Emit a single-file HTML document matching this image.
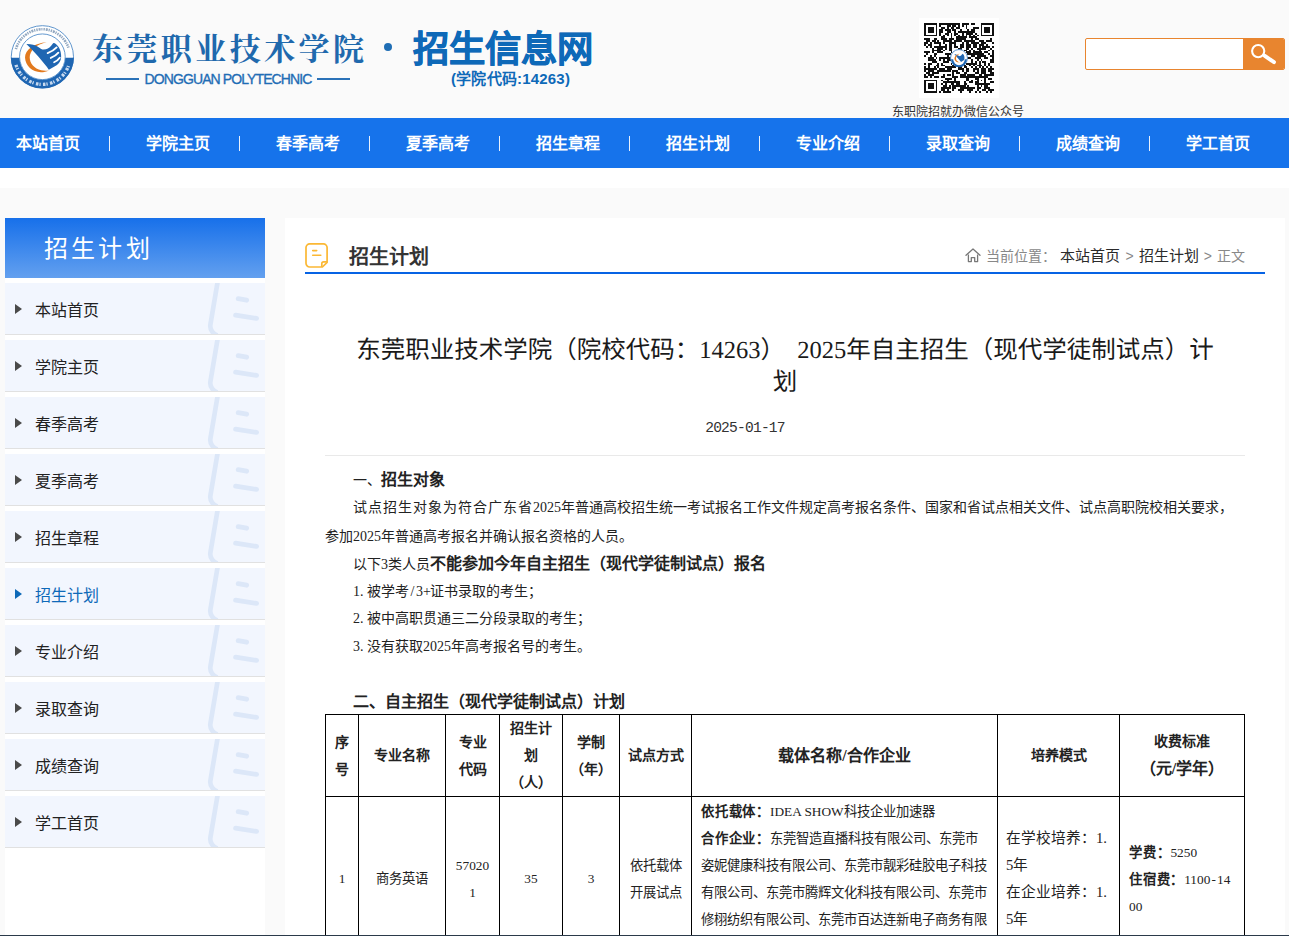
<!DOCTYPE html>
<html lang="zh-CN">
<head>
<meta charset="utf-8">
<title>东莞职业技术学院 · 招生信息网</title>
<style>
*{box-sizing:border-box;margin:0;padding:0}
html,body{width:1289px;height:936px;overflow:hidden}
body{background:#fafafa;font-family:"Liberation Sans",sans-serif;color:#222;position:relative}
a{color:inherit;text-decoration:none}
ul{list-style:none}

/* ---------- header ---------- */
#header{position:absolute;left:0;top:0;width:1289px;height:118px;background:#fafafa}
#emblem{position:absolute;left:9.8px;top:24.2px;width:64.4px;height:64.4px}
#logo-cn{position:absolute;left:90px;top:28px;width:276px;height:40px}
#logo-en{position:absolute;left:106px;top:71px;width:244px;height:17px;line-height:17px;font-size:14px;color:#1f6db5;text-align:center;white-space:nowrap;letter-spacing:-.9px;-webkit-text-stroke:.35px #1f6db5}
#logo-en:before,#logo-en:after{content:"";position:absolute;top:7px;width:33px;height:2px;background:#2a72b8}
#logo-en:before{left:0}
#logo-en:after{right:0}
#logo-dot{position:absolute;left:384px;top:43px;width:8px;height:8px;border-radius:50%;background:#1f6eb5}
#site-name{position:absolute;left:413px;top:27.5px;height:44px;line-height:44px;font-size:36.3px;font-weight:bold;color:#0e69b8;-webkit-text-stroke:.7px #0e69b8;white-space:nowrap}
#site-code{position:absolute;left:451px;top:69px;height:20px;line-height:20px;font-size:15px;font-weight:bold;color:#0e69b8;letter-spacing:.2px;white-space:nowrap}
#qr{position:absolute;left:919px;top:18px;width:80px;height:80px;background:#fff}
#qr-cap{position:absolute;left:878px;top:104px;width:160px;height:16px;line-height:16px;font-size:12px;color:#333;text-align:center;white-space:nowrap}
#search{position:absolute;left:1085px;top:38px;width:200px;height:32px;border:1px solid #e8852f;border-radius:2px;background:#fff;overflow:hidden}
#search-btn{position:absolute;right:-1px;top:-1px;width:42px;height:32px;background:#e8852f}

/* ---------- nav ---------- */
#nav{position:absolute;left:0;top:118px;width:1289px;height:50px;background:#1673eb}
#nav ul{position:absolute;left:0;top:0;height:50px;white-space:nowrap}
#nav li{position:absolute;top:0;width:130px;height:50px;line-height:51px;padding-left:15.5px;font-size:16px;font-weight:bold;color:#fff}
#nav li i{position:absolute;left:109px;top:18px;width:1px;height:15px;background:#e9f1fd}
#strip{position:absolute;left:0;top:168px;width:1289px;height:20px;background:#fff}

/* ---------- sidebar ---------- */
#side{position:absolute;left:5px;top:218px;width:260px;height:718px;background:#fff}
#side h2{height:60px;line-height:62px;padding-left:39px;font-size:24px;font-weight:normal;letter-spacing:3.2px;color:#fff;background:linear-gradient(#1770ea,#63a0ef)}
#side li{position:relative;height:52px;margin-top:5px;background:#f2f6fe;border-bottom:1px solid #e1e1e1;line-height:56px;padding-left:30px;font-size:16px;color:#222;overflow:hidden}
#side li:before{content:"";position:absolute;left:10px;top:21px;border-left:7px solid #4a4a4a;border-top:5px solid transparent;border-bottom:5px solid transparent}
#side li.on{color:#0e69b8}
#side li.on:before{border-left-color:#0e69b8}
#side li svg{position:absolute;left:200px;top:0;width:60px;height:51px}

/* ---------- main ---------- */
#main{position:absolute;left:285px;top:218px;width:1000px;height:718px;background:#fff}
#bar{position:absolute;left:20px;top:20px;width:960px;height:36px;border-bottom:2px solid #0763e4}
#bar svg.doc{position:absolute;left:0;top:5px;width:24px;height:26px}
#bar h3{position:absolute;left:44px;top:5px;height:28px;line-height:28px;font-size:20px;font-weight:bold;color:#333}
#crumb{position:absolute;right:20px;top:6px;height:24px;line-height:24px;font-size:14px;color:#888;white-space:nowrap}
#crumb svg{position:absolute;left:-21px;top:4px;width:16px;height:15px}
#crumb a{font-size:15px;color:#2a2a2a}
#crumb i{font-style:normal;margin:0 1.2px}
#art-title{position:absolute;left:60px;top:117px;width:880px;text-align:center;font-family:"Liberation Serif",serif;font-size:24.5px;line-height:32px;text-rendering:geometricPrecision;font-weight:normal;color:#1a1a1a;white-space:nowrap}
#art-date{position:absolute;left:400px;top:199px;width:120px;height:22px;line-height:22px;text-align:center;font-family:"Liberation Mono",monospace;font-size:14.6px;letter-spacing:-.8px;color:#333;white-space:nowrap}
#art-hr{position:absolute;left:40px;top:237px;width:920px;height:1px;background:#e9e9e9}
#art{position:absolute;left:40px;top:247px;width:920px;font-family:"Liberation Serif",serif;font-size:14px;line-height:28px;color:#222}
#art p{position:absolute;left:0;height:28px;white-space:nowrap;text-indent:28px}
#art p.ni{text-indent:0}
#art b{font-size:16px}
#art i{display:inline-block;font-style:normal;text-indent:0;text-align:center}
#art i.w1{width:7px}
#art i.w2{width:14px;text-align:left}
#art .h2{font-size:16px;font-weight:bold}
#tbl{position:absolute;left:40px;top:496px;width:920px;border-collapse:collapse;table-layout:fixed;font-family:"Liberation Serif",serif;font-size:13.33px;line-height:27px;color:#222}
#tbl td,#tbl th{border:1px solid #000;text-align:center;vertical-align:middle;padding:0}
#tbl th{font-weight:bold;font-size:14px}
#tbl td.l{text-align:left;padding-left:9px;white-space:nowrap}
#tbl td b{letter-spacing:.8px}
#tbl td i{display:inline-block;width:6.7px;text-align:center;font-style:normal}
#botline{position:absolute;left:0;top:935px;width:1289px;height:1px;background:#2b3a4a}
</style>
</head>
<body>

<div id="header">
  <svg id="emblem" viewBox="0 0 66 66">
    <defs><clipPath id="lowhalf"><rect x="0" y="34.6" width="66" height="32"/></clipPath></defs>
    <circle cx="33.2" cy="33.6" r="31.9" fill="#fff" stroke="#5b93cc" stroke-width="1"/>
    <circle cx="33.2" cy="33.6" r="27.9" fill="none" stroke="#1f66b2" stroke-width="9" clip-path="url(#lowhalf)"/>
    <circle cx="33.2" cy="33.6" r="23.4" fill="#fff" stroke="#4f8ac8" stroke-width="0.9"/>
    <path d="M6 25.8A28.3 28.3 0 0 1 59.9 24.25" fill="none" stroke="#93a9c2" stroke-width="2.7" stroke-dasharray="1.5 0.9 2.1 0.8 1.2 1"/>
    <path d="M6.14 41.9A28.3 28.3 0 0 0 60.26 41.9" fill="none" stroke="#dbe7f5" stroke-width="3.4" stroke-dasharray="2.6 1 1.3 2.4" opacity=".9"/>
    <path d="M37.6 18.6C25 19.5 15.2 26 15.4 34.4C15.7 43 23 49.4 31.6 49.4C34.6 49.4 37.6 48.8 39.8 47.6C37 48 34.4 47.9 32 47.4C25 46 20.2 40.6 20.2 34.2C20.2 27 27 20.6 37.6 18.6Z" fill="#e27a1f"/>
    <path d="M16.8 20.4C21.5 20.3 25.6 21.2 28.6 23.2C30.6 24.6 32.6 26.2 34.6 26.2C37.6 26 40.4 24.6 42.4 22C43.2 20.8 44 19.6 44.8 19.4C46.2 19.4 48.4 21.2 50.2 24C51.8 26.8 52.6 30.6 52.4 34.4C52 38 50.4 40.6 47.8 42.2C45.2 43.8 42.4 45.4 39.8 46.8C37.4 43.4 33.4 38.6 29 33.4C24.6 28.4 20.4 23.8 16.8 20.4Z" fill="#1f66b2"/>
    <path d="M38.6 29.8C42 28.6 45.4 26.6 47.8 24M41.8 34.8C45 33.6 47.8 31.6 49.6 29.4M45.2 39.2C47.6 38.2 49.6 36.6 51 34.6" fill="none" stroke="#fff" stroke-width="1.9" stroke-linecap="round"/>
  </svg>
  <svg id="logo-cn" viewBox="90 28 276 40" width="276" height="40"><text x="92" y="60" font-family="&quot;Liberation Serif&quot;, &quot;Noto Serif CJK SC&quot;, serif" font-size="31" font-weight="bold" fill="#1f69ad" textLength="272" lengthAdjust="spacing">东莞职业技术学院</text></svg>
  <div id="logo-en">DONGGUAN POLYTECHNIC</div>
  <div id="logo-dot"></div>
  <div id="site-name">招生信息网</div>
  <div id="site-code">(学院代码:14263)</div>
  <div id="qr"><svg viewBox="-2.8 -2.8 42.6 42.6" width="80" height="80" shape-rendering="crispEdges"><path fill="#111" d="M0 0h7v1h-7zM8 0h11v1h-11zM20 0h4v1h-4zM25 0h2v1h-2zM30 0h7v1h-7zM0 1h1v1h-1zM6 1h1v1h-1zM8 1h1v1h-1zM12 1h2v1h-2zM15 1h2v1h-2zM18 1h1v1h-1zM20 1h1v1h-1zM22 1h1v1h-1zM30 1h1v1h-1zM36 1h1v1h-1zM0 2h1v1h-1zM2 2h3v1h-3zM6 2h1v1h-1zM9 2h2v1h-2zM12 2h1v1h-1zM14 2h2v1h-2zM17 2h2v1h-2zM22 2h1v1h-1zM26 2h3v1h-3zM30 2h1v1h-1zM32 2h3v1h-3zM36 2h1v1h-1zM0 3h1v1h-1zM2 3h3v1h-3zM6 3h1v1h-1zM8 3h2v1h-2zM11 3h3v1h-3zM15 3h2v1h-2zM19 3h1v1h-1zM23 3h1v1h-1zM25 3h2v1h-2zM30 3h1v1h-1zM32 3h3v1h-3zM36 3h1v1h-1zM0 4h1v1h-1zM2 4h3v1h-3zM6 4h1v1h-1zM8 4h2v1h-2zM12 4h2v1h-2zM16 4h1v1h-1zM18 4h9v1h-9zM30 4h1v1h-1zM32 4h3v1h-3zM36 4h1v1h-1zM0 5h1v1h-1zM6 5h1v1h-1zM8 5h1v1h-1zM11 5h2v1h-2zM14 5h1v1h-1zM16 5h2v1h-2zM20 5h1v1h-1zM22 5h4v1h-4zM27 5h1v1h-1zM30 5h1v1h-1zM36 5h1v1h-1zM0 6h7v1h-7zM8 6h1v1h-1zM10 6h1v1h-1zM12 6h1v1h-1zM14 6h1v1h-1zM16 6h1v1h-1zM18 6h1v1h-1zM20 6h1v1h-1zM22 6h1v1h-1zM24 6h1v1h-1zM26 6h1v1h-1zM28 6h1v1h-1zM30 6h7v1h-7zM9 7h2v1h-2zM14 7h1v1h-1zM17 7h6v1h-6zM24 7h4v1h-4zM0 8h3v1h-3zM5 8h2v1h-2zM9 8h3v1h-3zM13 8h3v1h-3zM17 8h5v1h-5zM25 8h1v1h-1zM27 8h2v1h-2zM35 8h1v1h-1zM1 9h2v1h-2zM4 9h2v1h-2zM7 9h1v1h-1zM10 9h5v1h-5zM16 9h4v1h-4zM21 9h6v1h-6zM29 9h3v1h-3zM33 9h3v1h-3zM0 10h2v1h-2zM3 10h1v1h-1zM5 10h4v1h-4zM10 10h1v1h-1zM13 10h4v1h-4zM20 10h1v1h-1zM22 10h2v1h-2zM25 10h4v1h-4zM30 10h3v1h-3zM36 10h1v1h-1zM0 11h1v1h-1zM2 11h2v1h-2zM8 11h1v1h-1zM11 11h1v1h-1zM13 11h2v1h-2zM16 11h1v1h-1zM19 11h2v1h-2zM22 11h3v1h-3zM26 11h2v1h-2zM29 11h3v1h-3zM33 11h1v1h-1zM1 12h1v1h-1zM3 12h1v1h-1zM5 12h7v1h-7zM13 12h2v1h-2zM16 12h2v1h-2zM19 12h2v1h-2zM22 12h3v1h-3zM26 12h2v1h-2zM29 12h1v1h-1zM31 12h4v1h-4zM36 12h1v1h-1zM4 13h1v1h-1zM7 13h3v1h-3zM11 13h1v1h-1zM13 13h2v1h-2zM18 13h2v1h-2zM22 13h2v1h-2zM25 13h1v1h-1zM28 13h5v1h-5zM35 13h1v1h-1zM4 14h5v1h-5zM10 14h1v1h-1zM13 14h2v1h-2zM21 14h2v1h-2zM24 14h1v1h-1zM26 14h1v1h-1zM29 14h1v1h-1zM34 14h1v1h-1zM36 14h1v1h-1zM0 15h3v1h-3zM4 15h1v1h-1zM7 15h3v1h-3zM14 15h1v1h-1zM22 15h3v1h-3zM26 15h5v1h-5zM32 15h2v1h-2zM36 15h1v1h-1zM1 16h1v1h-1zM5 16h2v1h-2zM11 16h3v1h-3zM23 16h9v1h-9zM34 16h1v1h-1zM36 16h1v1h-1zM0 17h1v1h-1zM3 17h1v1h-1zM5 17h1v1h-1zM12 17h1v1h-1zM25 17h2v1h-2zM28 17h5v1h-5zM35 17h2v1h-2zM2 18h3v1h-3zM6 18h1v1h-1zM8 18h6v1h-6zM23 18h2v1h-2zM27 18h3v1h-3zM32 18h2v1h-2zM36 18h1v1h-1zM2 19h4v1h-4zM8 19h1v1h-1zM10 19h1v1h-1zM12 19h2v1h-2zM25 19h1v1h-1zM28 19h1v1h-1zM30 19h1v1h-1zM35 19h2v1h-2zM4 20h3v1h-3zM10 20h3v1h-3zM25 20h1v1h-1zM27 20h1v1h-1zM29 20h1v1h-1zM31 20h2v1h-2zM35 20h2v1h-2zM0 21h1v1h-1zM2 21h2v1h-2zM7 21h1v1h-1zM9 21h1v1h-1zM14 21h1v1h-1zM22 21h6v1h-6zM29 21h1v1h-1zM32 21h1v1h-1zM34 21h1v1h-1zM2 22h1v1h-1zM6 22h2v1h-2zM9 22h2v1h-2zM15 22h1v1h-1zM21 22h1v1h-1zM24 22h1v1h-1zM26 22h1v1h-1zM28 22h3v1h-3zM32 22h1v1h-1zM34 22h1v1h-1zM0 23h1v1h-1zM2 23h1v1h-1zM5 23h1v1h-1zM7 23h1v1h-1zM11 23h6v1h-6zM18 23h2v1h-2zM21 23h2v1h-2zM25 23h1v1h-1zM27 23h1v1h-1zM29 23h1v1h-1zM31 23h1v1h-1zM33 23h1v1h-1zM35 23h1v1h-1zM0 24h7v1h-7zM8 24h3v1h-3zM12 24h3v1h-3zM18 24h3v1h-3zM22 24h2v1h-2zM26 24h3v1h-3zM30 24h3v1h-3zM34 24h3v1h-3zM0 25h1v1h-1zM2 25h3v1h-3zM7 25h7v1h-7zM15 25h3v1h-3zM20 25h1v1h-1zM22 25h2v1h-2zM26 25h1v1h-1zM28 25h1v1h-1zM30 25h3v1h-3zM34 25h2v1h-2zM1 26h2v1h-2zM4 26h4v1h-4zM15 26h1v1h-1zM17 26h2v1h-2zM21 26h2v1h-2zM27 26h2v1h-2zM30 26h3v1h-3zM35 26h2v1h-2zM0 27h1v1h-1zM2 27h3v1h-3zM10 27h1v1h-1zM12 27h2v1h-2zM15 27h1v1h-1zM19 27h3v1h-3zM23 27h4v1h-4zM29 27h2v1h-2zM32 27h5v1h-5zM0 28h2v1h-2zM3 28h1v1h-1zM5 28h3v1h-3zM9 28h2v1h-2zM15 28h3v1h-3zM19 28h15v1h-15zM11 29h4v1h-4zM16 29h1v1h-1zM22 29h2v1h-2zM27 29h2v1h-2zM32 29h1v1h-1zM34 29h2v1h-2zM0 30h7v1h-7zM9 30h1v1h-1zM12 30h1v1h-1zM16 30h1v1h-1zM22 30h2v1h-2zM25 30h1v1h-1zM28 30h1v1h-1zM30 30h1v1h-1zM32 30h1v1h-1zM0 31h1v1h-1zM6 31h1v1h-1zM10 31h9v1h-9zM21 31h1v1h-1zM24 31h2v1h-2zM27 31h2v1h-2zM32 31h1v1h-1zM35 31h2v1h-2zM0 32h1v1h-1zM2 32h3v1h-3zM6 32h1v1h-1zM9 32h1v1h-1zM11 32h1v1h-1zM14 32h2v1h-2zM17 32h2v1h-2zM21 32h2v1h-2zM27 32h8v1h-8zM0 33h1v1h-1zM2 33h3v1h-3zM6 33h1v1h-1zM10 33h2v1h-2zM13 33h1v1h-1zM15 33h7v1h-7zM23 33h1v1h-1zM28 33h1v1h-1zM30 33h1v1h-1zM32 33h2v1h-2zM0 34h1v1h-1zM2 34h3v1h-3zM6 34h1v1h-1zM9 34h5v1h-5zM15 34h2v1h-2zM19 34h8v1h-8zM28 34h2v1h-2zM32 34h3v1h-3zM0 35h1v1h-1zM6 35h1v1h-1zM9 35h2v1h-2zM12 35h1v1h-1zM15 35h1v1h-1zM18 35h3v1h-3zM23 35h3v1h-3zM28 35h1v1h-1zM31 35h2v1h-2zM34 35h3v1h-3zM0 36h7v1h-7zM8 36h1v1h-1zM10 36h4v1h-4zM19 36h1v1h-1zM24 36h1v1h-1zM27 36h1v1h-1zM29 36h1v1h-1zM33 36h1v1h-1zM35 36h1v1h-1z"/><g shape-rendering="auto"><circle cx="18.5" cy="18.5" r="4.5" fill="#fff" stroke="#4f8ac8" stroke-width=".5"/><path d="M14.3 19.2A4.2 4.2 0 0 0 22.7 19.2L21.6 19.2A3.1 3.1 0 0 1 15.4 19.2Z" fill="#1f66b2"/><path d="M16 16.4C17.6 16.6 18.2 17.6 18.9 17.5C19.8 17.3 20 16.3 20.5 16.2C21.4 17 21.7 18.6 21.2 19.6L19.6 20.6Z" fill="#1f66b2"/><path d="M18.8 16.2C16.8 16.6 15.8 18 16.2 19.4C16.6 20.5 17.8 21 19.4 20.7C17.8 20.6 16.9 19.8 16.9 18.7C16.9 17.6 17.6 16.8 18.8 16.2Z" fill="#e27a1f"/></g></svg></div>
  <div id="qr-cap">东职院招就办微信公众号</div>
  <div id="search"><div id="search-btn"><svg viewBox="0 0 42 32" width="42" height="32"><circle cx="15.2" cy="13.1" r="6.1" fill="none" stroke="#fff" stroke-width="2.1"/><path d="M21.8 17.9L31 24.2" stroke="#fff" stroke-width="3.9" stroke-linecap="round"/></svg></div></div>
</div>

<div id="nav">
  <ul>
    <li style="left:0"><a>本站首页</a><i></i></li>
    <li style="left:130px"><a>学院主页</a><i></i></li>
    <li style="left:260px"><a>春季高考</a><i></i></li>
    <li style="left:390px"><a>夏季高考</a><i></i></li>
    <li style="left:520px"><a>招生章程</a><i></i></li>
    <li style="left:650px"><a>招生计划</a><i></i></li>
    <li style="left:780px"><a>专业介绍</a><i></i></li>
    <li style="left:910px"><a>录取查询</a><i></i></li>
    <li style="left:1040px"><a>成绩查询</a><i></i></li>
    <li style="left:1170px"><a>学工首页</a></li>
  </ul>
</div>
<div id="strip"></div>

<div id="side">
  <h2>招生计划</h2>
  <ul>
    <li><a>本站首页</a><svg viewBox="0 0 60 51"><path d="M12.6 -1L5.4 41.5C4.8 46 6.8 50 12.2 52.5" fill="none" stroke="#dce7f8" stroke-width="4.7"/><path d="M33.2 15.7L41.7 17.2M30.6 32.2L51.6 35.4" stroke="#dce7f8" stroke-width="4.8" stroke-linecap="round"/></svg></li>
    <li><a>学院主页</a><svg viewBox="0 0 60 51"><path d="M12.6 -1L5.4 41.5C4.8 46 6.8 50 12.2 52.5" fill="none" stroke="#dce7f8" stroke-width="4.7"/><path d="M33.2 15.7L41.7 17.2M30.6 32.2L51.6 35.4" stroke="#dce7f8" stroke-width="4.8" stroke-linecap="round"/></svg></li>
    <li><a>春季高考</a><svg viewBox="0 0 60 51"><path d="M12.6 -1L5.4 41.5C4.8 46 6.8 50 12.2 52.5" fill="none" stroke="#dce7f8" stroke-width="4.7"/><path d="M33.2 15.7L41.7 17.2M30.6 32.2L51.6 35.4" stroke="#dce7f8" stroke-width="4.8" stroke-linecap="round"/></svg></li>
    <li><a>夏季高考</a><svg viewBox="0 0 60 51"><path d="M12.6 -1L5.4 41.5C4.8 46 6.8 50 12.2 52.5" fill="none" stroke="#dce7f8" stroke-width="4.7"/><path d="M33.2 15.7L41.7 17.2M30.6 32.2L51.6 35.4" stroke="#dce7f8" stroke-width="4.8" stroke-linecap="round"/></svg></li>
    <li><a>招生章程</a><svg viewBox="0 0 60 51"><path d="M12.6 -1L5.4 41.5C4.8 46 6.8 50 12.2 52.5" fill="none" stroke="#dce7f8" stroke-width="4.7"/><path d="M33.2 15.7L41.7 17.2M30.6 32.2L51.6 35.4" stroke="#dce7f8" stroke-width="4.8" stroke-linecap="round"/></svg></li>
    <li class="on"><a>招生计划</a><svg viewBox="0 0 60 51"><path d="M12.6 -1L5.4 41.5C4.8 46 6.8 50 12.2 52.5" fill="none" stroke="#dce7f8" stroke-width="4.7"/><path d="M33.2 15.7L41.7 17.2M30.6 32.2L51.6 35.4" stroke="#dce7f8" stroke-width="4.8" stroke-linecap="round"/></svg></li>
    <li><a>专业介绍</a><svg viewBox="0 0 60 51"><path d="M12.6 -1L5.4 41.5C4.8 46 6.8 50 12.2 52.5" fill="none" stroke="#dce7f8" stroke-width="4.7"/><path d="M33.2 15.7L41.7 17.2M30.6 32.2L51.6 35.4" stroke="#dce7f8" stroke-width="4.8" stroke-linecap="round"/></svg></li>
    <li><a>录取查询</a><svg viewBox="0 0 60 51"><path d="M12.6 -1L5.4 41.5C4.8 46 6.8 50 12.2 52.5" fill="none" stroke="#dce7f8" stroke-width="4.7"/><path d="M33.2 15.7L41.7 17.2M30.6 32.2L51.6 35.4" stroke="#dce7f8" stroke-width="4.8" stroke-linecap="round"/></svg></li>
    <li><a>成绩查询</a><svg viewBox="0 0 60 51"><path d="M12.6 -1L5.4 41.5C4.8 46 6.8 50 12.2 52.5" fill="none" stroke="#dce7f8" stroke-width="4.7"/><path d="M33.2 15.7L41.7 17.2M30.6 32.2L51.6 35.4" stroke="#dce7f8" stroke-width="4.8" stroke-linecap="round"/></svg></li>
    <li><a>学工首页</a><svg viewBox="0 0 60 51"><path d="M12.6 -1L5.4 41.5C4.8 46 6.8 50 12.2 52.5" fill="none" stroke="#dce7f8" stroke-width="4.7"/><path d="M33.2 15.7L41.7 17.2M30.6 32.2L51.6 35.4" stroke="#dce7f8" stroke-width="4.8" stroke-linecap="round"/></svg></li>
  </ul>
</div>

<div id="main">
  <div id="bar">
    <svg class="doc" viewBox="0 0 24 26"><path d="M4.7 0.9H18.4A3.7 3.7 0 0 1 22.1 4.6V19.4L17.4 24H4.7A3.7 3.7 0 0 1 1 20.3V4.6A3.7 3.7 0 0 1 4.7 0.9Z" fill="none" stroke="#fbb834" stroke-width="1.7" stroke-linejoin="round"/><path d="M22.1 18.9H18.6A1.8 1.8 0 0 0 16.8 20.7V24" fill="none" stroke="#fbb834" stroke-width="1.7"/><path d="M7.7 7.6H11.7M7.7 12.3H15.8" stroke="#fbb834" stroke-width="1.6" stroke-linecap="round"/></svg>
    <h3>招生计划</h3>
    <div id="crumb"><svg viewBox="0 0 16 15"><path d="M1 7.2L8 1L15 7.2" fill="none" stroke="#777" stroke-width="1.3" stroke-linecap="round" stroke-linejoin="round"/><path d="M3.4 6.6V13.6H6.3V9.6H9.7V13.6H12.6V6.6" fill="none" stroke="#777" stroke-width="1.3" stroke-linejoin="round"/></svg>当前位置： <a>本站首页</a> <i>&gt;</i> <a>招生计划</a> <i>&gt;</i> 正文</div>
  </div>
  <h1 id="art-title">东莞职业技术学院（院校代码：14263）&ensp;2025年自主招生（现代学徒制试点）计<br>划</h1>
  <div id="art-date">2025-01-17</div>
  <div id="art-hr"></div>
  <div id="art">
    <p style="top:1px">一、<b>招生对象</b></p>
    <p style="top:29px"><span style="letter-spacing:1px">试点招生对象为符合广东省</span>2025年普通高校招生统一考试报名工作文件规定高考报名条件、国家和省试点相关文件、试点高职院校相关要求，</p>
    <p style="top:58px" class="ni">参加2025年普通高考报名并确认报名资格的人员。</p>
    <p style="top:85px">以下3类人员<b>不能参加今年自主招生（现代学徒制试点）报名</b></p>
    <p style="top:113px"><i class="w2">1.</i>被学考<i class="w1">/</i>3<i class="w1">+</i>证书录取的考生；</p>
    <p style="top:140px"><i class="w2">2.</i>被中高职贯通三二分段录取的考生；</p>
    <p style="top:168px"><i class="w2">3.</i>没有获取2025年高考报名号的考生。</p>
    <p style="top:223px" class="h2">二、自主招生（现代学徒制试点）计划</p>
  </div>
  <table id="tbl">
    <colgroup><col style="width:33px"><col style="width:87px"><col style="width:54px"><col style="width:63px"><col style="width:57px"><col style="width:72px"><col style="width:306px"><col style="width:122px"><col style="width:125px"></colgroup>
    <tr style="height:82px">
      <th>序<br>号</th><th>专业名称</th><th>专业<br>代码</th><th>招生计<br>划<br>（人）</th><th>学制<br>（年）</th><th>试点方式</th><th style="font-size:16px">载体名称/合作企业</th><th>培养模式</th><th>收费标准<br><span style="font-size:16px">（元/学年）</span></th>
    </tr>
    <tr style="height:164px">
      <td>1</td><td>商务英语</td><td>57020<br>1</td><td>35</td><td>3</td><td>依托载体<br>开展试点</td>
      <td class="l"><b>依托载体：</b>IDEA SHOW科技企业加速器<br><b>合作企业：</b>东莞智造直播科技有限公司、东莞市<br>姿妮健康科技有限公司、东莞市靓彩硅胶电子科技<br>有限公司、东莞市腾辉文化科技有限公司、东莞市<br>修栩纺织有限公司、东莞市百达连新电子商务有限<br>公司</td>
      <td class="l" style="font-size:14.67px;padding-left:8px">在学校培养：1.<br>5年<br>在企业培养：1.<br>5年</td>
      <td class="l" style="padding-top:2px"><b>学费：</b>5250<br><b>住宿费：</b>1100<i>-</i>14<br>00</td>
    </tr>
  </table>
</div>

<div id="botline"></div>
</body>
</html>
